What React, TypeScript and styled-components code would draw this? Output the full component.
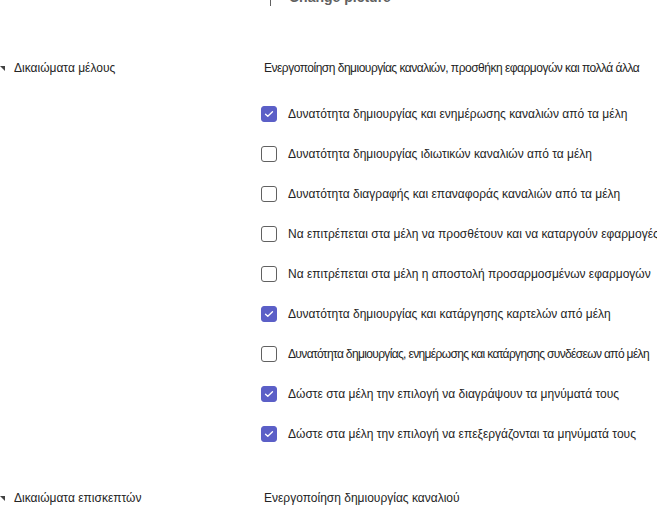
import styled, { createGlobalStyle } from "styled-components";

const GlobalStyle = createGlobalStyle`
  html, body {
    margin: 0;
    padding: 0;
    background: #ffffff;
  }
  body {
    font-family: "Liberation Sans", Arial, sans-serif;
    color: #242424;
    overflow: hidden;
  }
`;

const Page = styled.div`
  width: 657px;
  height: 521px;
  overflow: hidden;
`;

const PictureRow = styled.div`
  display: flex;
  align-items: flex-start;
  gap: 18px;
  margin-left: 270px;
  margin-top: -12px;
  height: 18px;
`;

const Divider = styled.span`
  width: 1px;
  height: 18px;
  background: #616161;
`;

const ChangePicture = styled.span`
  font-size: 14px;
  font-weight: 700;
  color: #616161;
  line-height: 18px;
`;

const Section = styled.section<{ $top: number }>`
  display: grid;
  grid-template-columns: 263px 1fr;
  align-items: start;
  margin-top: ${({ $top }) => $top}px;
`;

const SectionLabel = styled.div`
  display: flex;
  align-items: center;
  gap: 8px;
  font-size: 12px;
  line-height: 20px;
  white-space: nowrap;
`;

const Caret = styled.svg`
  width: 6px;
  height: 6px;
  flex: none;
`;

const SectionBody = styled.div`
  display: flex;
  flex-direction: column;
`;

const Heading = styled.div<{ $tight?: boolean }>`
  font-size: 12px;
  line-height: 20px;
  white-space: nowrap;
  padding-left: 1px;
  letter-spacing: ${({ $tight }) => ($tight ? "-0.5px" : "normal")};
`;

const OptionList = styled.ul`
  list-style: none;
  margin: 26px 0 0 -2px;
  padding: 0;
  display: flex;
  flex-direction: column;
  gap: 20px;
`;

const Option = styled.li<{ $tight?: boolean }>`
  display: flex;
  align-items: center;
  gap: 11px;
  height: 20px;
  font-size: 12px;
  white-space: nowrap;
  letter-spacing: ${({ $tight }) => ($tight ? "-0.65px" : "normal")};
`;

const Box = styled.span<{ $checked: boolean }>`
  width: 16px;
  height: 16px;
  flex: none;
  box-sizing: border-box;
  border-radius: 3px;
  display: flex;
  align-items: center;
  justify-content: center;
  background: ${({ $checked }) => ($checked ? "#5b5fc7" : "#ffffff")};
  border: 1px solid ${({ $checked }) => ($checked ? "#5b5fc7" : "#616161")};
`;

function Checkbox({ checked }: { checked: boolean }) {
  return (
    <Box $checked={checked}>
      {checked && (
        <svg width="10" height="8" viewBox="0 0 10 8">
          <path
            d="M1.5 4.2 L3.8 6.3 L8.5 1.7"
            fill="none"
            stroke="#ffffff"
            strokeWidth="1.3"
            strokeLinecap="round"
            strokeLinejoin="round"
          />
        </svg>
      )}
    </Box>
  );
}

const memberOptions = [
  { label: "Δυνατότητα δημιουργίας και ενημέρωσης καναλιών από τα μέλη", checked: true },
  { label: "Δυνατότητα δημιουργίας ιδιωτικών καναλιών από τα μέλη", checked: false },
  { label: "Δυνατότητα διαγραφής και επαναφοράς καναλιών από τα μέλη", checked: false },
  { label: "Να επιτρέπεται στα μέλη να προσθέτουν και να καταργούν εφαρμογές", checked: false },
  { label: "Να επιτρέπεται στα μέλη η αποστολή προσαρμοσμένων εφαρμογών", checked: false },
  { label: "Δυνατότητα δημιουργίας και κατάργησης καρτελών από μέλη", checked: true },
  {
    label: "Δυνατότητα δημιουργίας, ενημέρωσης και κατάργησης συνδέσεων από μέλη",
    checked: false,
    tight: true,
  },
  { label: "Δώστε στα μέλη την επιλογή να διαγράψουν τα μηνύματά τους", checked: true },
  { label: "Δώστε στα μέλη την επιλογή να επεξεργάζονται τα μηνύματά τους", checked: true },
];

function CaretIcon() {
  return (
    <Caret viewBox="0 0 6 6">
      <path d="M0 1 L5 1 L5 6 Z" fill="#424242" />
    </Caret>
  );
}

export default function App() {
  return (
    <>
      <GlobalStyle />
      <Page>
        <PictureRow>
          <Divider />
          <ChangePicture>Change picture</ChangePicture>
        </PictureRow>

        <Section $top={52}>
          <SectionLabel>
            <CaretIcon />
            Δικαιώματα μέλους
          </SectionLabel>
          <SectionBody>
            <Heading $tight>
              Ενεργοποίηση δημιουργίας καναλιών, προσθήκη εφαρμογών και πολλά άλλα
            </Heading>
            <OptionList>
              {memberOptions.map((o) => (
                <Option key={o.label} $tight={o.tight}>
                  <Checkbox checked={o.checked} />
                  {o.label}
                </Option>
              ))}
            </OptionList>
          </SectionBody>
        </Section>

        <Section $top={44}>
          <SectionLabel>
            <CaretIcon />
            Δικαιώματα επισκεπτών
          </SectionLabel>
          <SectionBody>
            <Heading>Ενεργοποίηση δημιουργίας καναλιού</Heading>
          </SectionBody>
        </Section>
      </Page>
    </>
  );
}
